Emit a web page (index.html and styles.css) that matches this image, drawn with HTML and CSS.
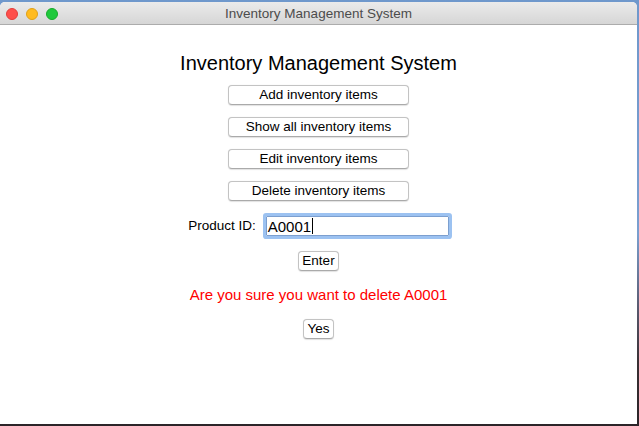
FILE: index.html
```html
<!DOCTYPE html>
<html lang="en">
<head>
<meta charset="utf-8">
<title>Inventory Management System</title>
<link rel="stylesheet" href="styles.css">
</head>
<body>
<div class="desktop">
  <div class="window">
    <div class="titlebar">
      <div class="lights">
        <span class="light red"></span>
        <span class="light yellow"></span>
        <span class="light green"></span>
      </div>
      <div class="title">Inventory Management System</div>
      <div class="spacer"></div>
    </div>
    <div class="content">
      <h1 class="heading">Inventory Management System</h1>
      <div class="menu">
        <button class="btn wide">Add inventory items</button>
        <button class="btn wide">Show all inventory items</button>
        <button class="btn wide">Edit inventory items</button>
        <button class="btn wide">Delete inventory items</button>
      </div>
      <div class="idrow">
        <span class="label">Product ID:</span>
        <div class="field"><span class="value">A0001</span><span class="caret"></span></div>
      </div>
      <button class="btn small enter">Enter</button>
      <p class="warn">Are you sure you want to delete A0001</p>
      <button class="btn small yes">Yes</button>
    </div>
  </div>
</div>
</body>
</html>
```
FILE: styles.css
```css
* { box-sizing: border-box; }
html, body { margin: 0; padding: 0; }
body {
  width: 639px;
  height: 426px;
  overflow: hidden;
  font-family: "Liberation Sans", Arial, sans-serif;
}
.desktop {
  width: 639px;
  height: 426px;
  padding: 2px 2px 2px 0;
  background: linear-gradient(to bottom, #6f98cc 0%, #7a9fcf 55%, #5a5a70 72%, #3a3034 85%, #2b2428 100%);
}
.window {
  width: 637px;
  height: 422px;
  background: #ffffff;
  border-radius: 5px 5px 0 0;
  overflow: hidden;
  display: flex;
  flex-direction: column;
}
.titlebar {
  height: 23px;
  flex: none;
  display: grid;
  grid-template-columns: 1fr auto 1fr;
  align-items: center;
  padding-top: 1px;
  background: linear-gradient(to bottom, #ebebeb, #d6d6d6);
  border-bottom: 1px solid #acacac;
}
.lights {
  display: flex;
  gap: 8px;
  padding-left: 6px;
}
.light {
  width: 12px;
  height: 12px;
  border-radius: 50%;
  display: block;
}
.red { background: #fe4f4b; border: 1px solid #e33e3a; }
.yellow { background: #ffbb1f; border: 1px solid #e1a116; }
.green { background: #1fc93c; border: 1px solid #17ab2b; }
.title {
  font-size: 13.5px;
  color: #4c4c4c;
  line-height: 16px;
}
.content {
  display: flex;
  flex-direction: column;
  align-items: center;
  padding-top: 26px;
}
.heading {
  margin: 0;
  font-weight: normal;
  font-size: 20px;
  line-height: 24px;
  color: #000;
}
.menu {
  display: flex;
  flex-direction: column;
  gap: 12px;
  margin-top: 10px;
}
.btn {
  font-family: "Liberation Sans", Arial, sans-serif;
  font-size: 13.5px;
  color: #000;
  background: #fff;
  border: 1px solid #c3c3c3;
  border-bottom-color: #aaaaaa;
  border-radius: 4px;
  box-shadow: 0 0.5px 1px rgba(0,0,0,0.12);
  height: 20px;
  line-height: 18px;
  padding: 0;
  margin: 0;
}
.wide { width: 181px; }
.small { padding: 0 3px; }
.idrow {
  display: flex;
  align-items: center;
  margin-top: 15px;
  gap: 10px;
}
.label {
  font-size: 13.5px;
  color: #000;
  line-height: 16px;
}
.field {
  width: 183px;
  height: 20px;
  border: 1px solid #7c9fcf;
  box-shadow: 0 0 0 3px #9cc2f1;
  border-radius: 1px;
  display: flex;
  align-items: center;
  padding-left: 1px;
  font-size: 15px;
  color: #000;
}
.caret {
  display: block;
  width: 1px;
  height: 16px;
  background: #000;
  margin-left: 1px;
}
.enter { margin-top: 15px; }
.warn {
  margin: 14px 0 0 0;
  color: #ff0000;
  font-size: 15px;
  line-height: 20px;
}
.yes { margin-top: 14px; }
```
